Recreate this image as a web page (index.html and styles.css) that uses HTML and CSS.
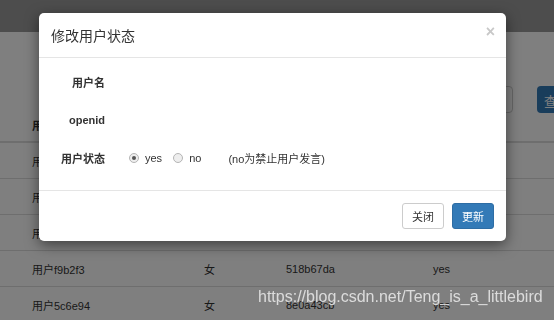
FILE: index.html
```html
<!DOCTYPE html>
<html lang="zh-cn">

<head>
  <meta charset="UTF-8">
  <meta name="viewport" content="width=device-width, initial-scale=1.0">
  <title>用户管理</title>
  <link rel="stylesheet" href="styles.css">
</head>

<body>
  <div class="navbar"></div>

  <div class="page">
    <div class="toolbar">
      <div class="search-input"></div>
      <div class="btn-search">查询</div>
    </div>

    <div class="table">
      <div class="row head">
        <div class="cell">用户名</div>
        <div class="cell">性别</div>
        <div class="cell">openid</div>
        <div class="cell">状态</div>
      </div>
      <div class="row">
        <div class="cell">用户a1c3e8</div>
        <div class="cell">男</div>
        <div class="cell">3fa2c91b</div>
        <div class="cell">yes</div>
      </div>
      <div class="row">
        <div class="cell">用户7d20b4</div>
        <div class="cell">男</div>
        <div class="cell">9c04e7a2</div>
        <div class="cell">yes</div>
      </div>
      <div class="row">
        <div class="cell">用户e35a07</div>
        <div class="cell">女</div>
        <div class="cell">c71d2f60</div>
        <div class="cell">no</div>
      </div>
      <div class="row">
        <div class="cell">用户f9b2f3</div>
        <div class="cell">女</div>
        <div class="cell">518b67da</div>
        <div class="cell">yes</div>
      </div>
      <div class="row">
        <div class="cell">用户5c6e94</div>
        <div class="cell">女</div>
        <div class="cell">8e0a43cb</div>
        <div class="cell">yes</div>
      </div>
    </div>
  </div>

  <!-- modal -->
  <div class="backdrop"></div>

  <div class="modal">
    <div class="modal-header">
      <h4 class="modal-title">修改用户状态</h4>
      <span class="close">&times;</span>
    </div>

    <div class="modal-body">
      <div class="form-row">
        <label class="form-label">用户名</label>
      </div>
      <div class="form-row">
        <label class="form-label">openid</label>
      </div>
      <div class="form-row">
        <label class="form-label">用户状态</label>
        <div class="radios">
          <span class="radio checked"></span><span class="radio-text">yes</span>
          <span class="radio"></span><span class="radio-text">no</span>
          <span class="hint">(no为禁止用户发言)</span>
        </div>
      </div>
    </div>

    <div class="modal-footer">
      <div class="btn btn-default">关闭</div>
      <div class="btn btn-primary">更新</div>
    </div>
  </div>

  <div class="watermark">https://blog.csdn.net/Teng_is_a_littlebird</div>
</body>

</html>
```

FILE: styles.css
```css
* {
  margin: 0;
  padding: 0;
  box-sizing: border-box;
}

body {
  background-color: #fff;
  color: #333;
  font-family: "Liberation Sans", "Noto Sans CJK SC", sans-serif;
  font-size: 11px;
  height: 320px;
  overflow: hidden;
}

.navbar {
  height: 32px;
  background: #9a9a9a;
}

.page {
  background: #fff;
}

.toolbar {
  height: 77px;
  display: flex;
  justify-content: flex-end;
  align-items: flex-start;
  padding-top: 54px;
  gap: 24px;
}

.search-input {
  width: 53px;
  height: 27px;
  border: 1px solid #ccc;
  border-radius: 4px;
}

.btn-search {
  width: 40px;
  height: 27px;
  background: #337ab7;
  color: #fff;
  border-radius: 4px;
  padding: 5px 7px;
  font-size: 13px;
  margin-right: -23px;
}

.table .row {
  display: grid;
  grid-template-columns: 204px 82px 147px 1fr;
  height: 36px;
  align-items: center;
  border-top: 1px solid #ddd;
}

.table .row.head {
  border-top: none;
  border-bottom: 1px solid #ddd;
  height: 33px;
  font-weight: bold;
}

.table .cell:first-child {
  padding-left: 32px;
}

/* modal */

.backdrop {
  position: fixed;
  inset: 0;
  background: rgba(0, 0, 0, 0.5);
}

.modal {
  position: absolute;
  left: 39px;
  top: 13px;
  width: 467px;
  background: #fff;
  border-radius: 5px;
  box-shadow: 0 4px 14px rgba(0, 0, 0, 0.5);
}

.modal-header {
  height: 45px;
  padding: 0 12px;
  display: flex;
  justify-content: space-between;
  align-items: center;
  border-bottom: 1px solid #e5e5e5;
}

.modal-title {
  font-size: 14px;
  font-weight: normal;
  color: #333;
}

.close {
  font-size: 16px;
  font-weight: bold;
  color: #c8c8c8;
  margin-top: -6px;
  margin-right: -1px;
}

.modal-body {
  padding: 5px 0 13px;
}

.form-row {
  height: 38px;
  display: flex;
  align-items: center;
}

.form-label {
  width: 66px;
  text-align: right;
  font-weight: bold;
}

.radios {
  display: flex;
  align-items: center;
  margin-left: 24px;
}

.radio {
  width: 10px;
  height: 10px;
  border: 1px solid #b5b5b5;
  border-radius: 50%;
  background: #eee;
  position: relative;
}

.radio.checked::after {
  content: "";
  position: absolute;
  left: 2px;
  top: 2px;
  width: 4px;
  height: 4px;
  border-radius: 50%;
  background: #555;
}

.radio-text {
  margin-left: 6px;
  margin-right: 11px;
}

.hint {
  margin-left: 16px;
}

.modal-footer {
  border-top: 1px solid #e5e5e5;
  padding: 12px;
  display: flex;
  justify-content: flex-end;
  gap: 8px;
}

.btn {
  height: 26px;
  padding: 0 9px;
  border-radius: 3px;
  border: 1px solid #ccc;
  display: flex;
  align-items: center;
}

.btn-default {
  background: #fff;
  color: #333;
}

.btn-primary {
  background: #337ab7;
  border-color: #2e6da4;
  color: #fff;
}

.watermark {
  position: absolute;
  left: 258px;
  top: 288px;
  font-size: 16px;
  color: rgba(235, 235, 235, 0.85);
}
```
